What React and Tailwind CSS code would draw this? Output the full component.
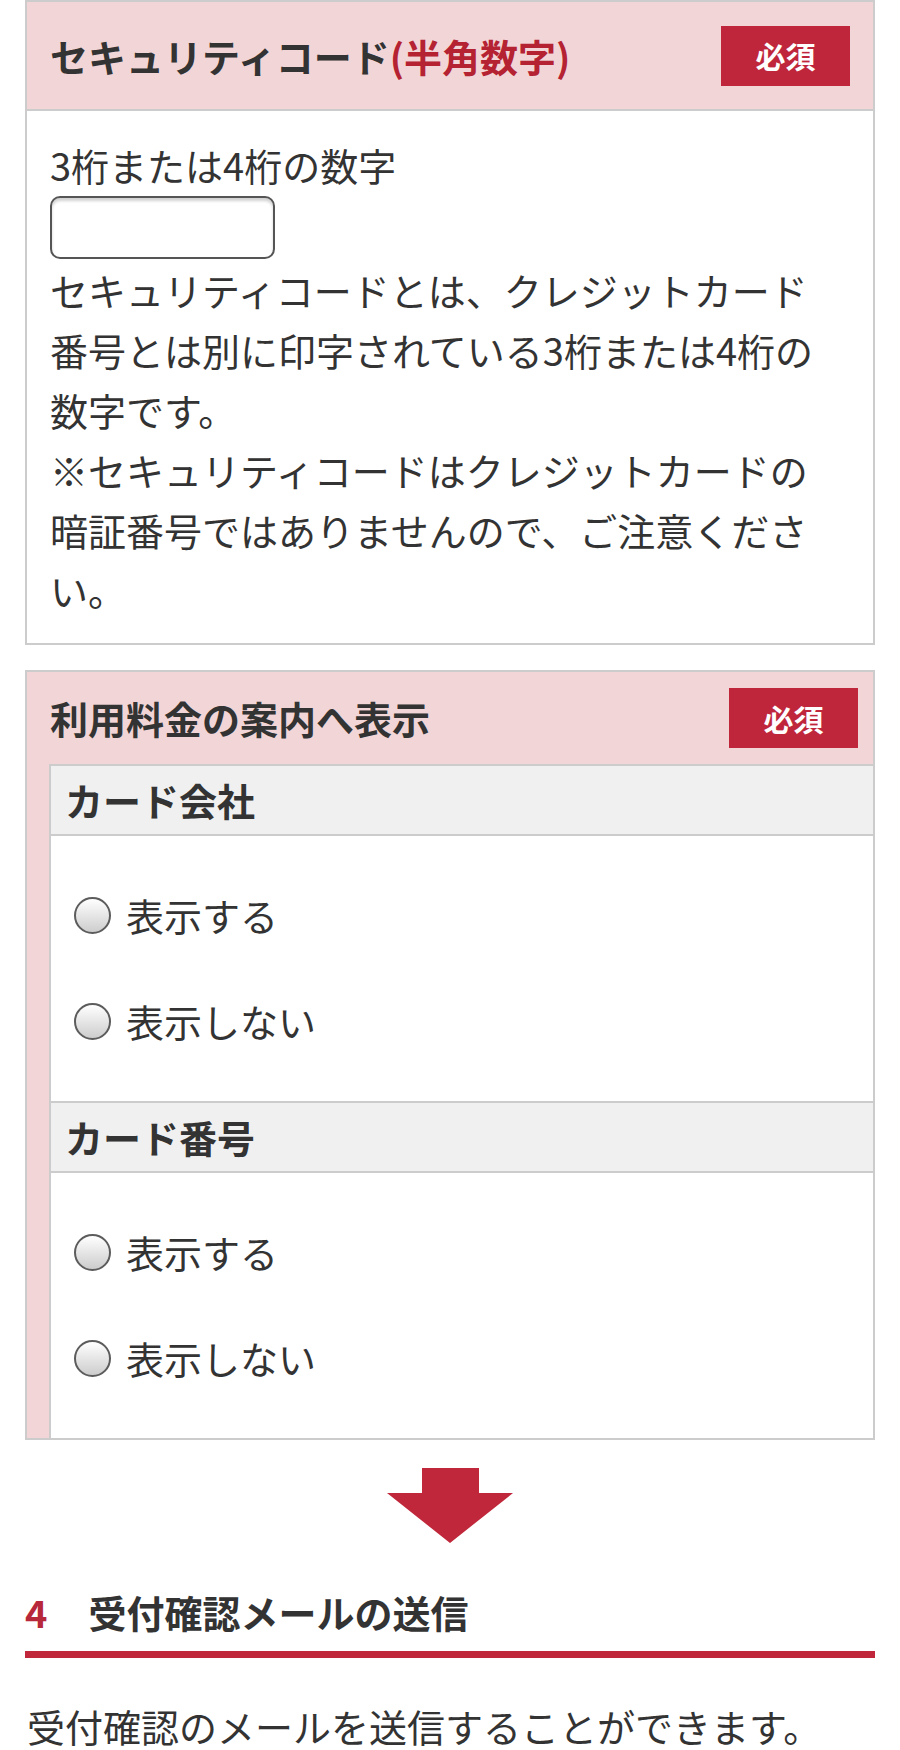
import React from "react"

const Badge = ({ className }) => (
  <span className={"flex h-[60px] w-[129px] items-center justify-center bg-[#c0263b] text-[30px] font-bold text-white " + (className || "")}>
    必須
  </span>
)

const Radio = ({ label }) => (
  <label className="flex h-[106px] items-center">
    <span className="h-[37px] w-[37px] rounded-full border-2 border-[#5c5c5c] bg-linear-to-b from-white to-[#cdcdcd]" />
    <span className="ml-[15px] text-[38px] leading-[60px]">{label}</span>
  </label>
)

const SubSection = ({ title }) => (
  <div>
    <div className="flex h-[72px] items-center border-y-2 border-[#cccccc] bg-[#f0f0f0] pl-[14px]">
      <span className="text-[38px] font-bold leading-none">{title}</span>
    </div>
    <div className="pl-[23px] pt-[26px] pb-[27px]">
      <Radio label="表示する" />
      <Radio label="表示しない" />
    </div>
  </div>
)

const App = () => {
  return (
    <div className="min-h-[1750px] bg-white font-['Noto_Sans_CJK_JP','Noto_Sans',sans-serif] text-[#333333]">
      {/* security code */}
      <section className="mx-[25px] border-2 border-[#cccccc]">
        <div className="flex h-[109px] items-center justify-between border-b-2 border-[#cccccc] bg-[#f2d6d7] pl-[23px] pr-[23px]">
          <h3 className="text-[38px] font-bold leading-none">
            セキュリティコード<span className="text-[#b52232]">(半角数字)</span>
          </h3>
          <Badge />
        </div>
        <div className="px-[23px] pt-6 pb-[23px] text-[38px] leading-[60px]">
          <p>3桁または4桁の数字</p>
          <div className="mt-px h-[63px] w-[225px] rounded-[10px] border-2 border-[#555555] shadow-[inset_0_3px_3px_rgba(0,0,0,0.18)]" />
          <p className="mt-px">
            セキュリティコードとは、クレジットカード<br />
            番号とは別に印字されている3桁または4桁の<br />
            数字です。<br />
            ※セキュリティコードはクレジットカードの<br />
            暗証番号ではありませんので、ご注意くださ<br />
            い。
          </p>
        </div>
      </section>

      {/* display on statement */}
      <section className="mx-[25px] mt-[25px] border-2 border-[#cccccc] bg-[#f2d6d7]">
        <div className="flex items-center justify-between pt-4 pb-4 pl-[23px] pr-[15px]">
          <h3 className="text-[38px] font-bold leading-none">利用料金の案内へ表示</h3>
          <Badge />
        </div>
        <div className="pl-[22px]">
          <div className="border-l-2 border-[#cccccc] bg-white">
            <SubSection title="カード会社" />
            <SubSection title="カード番号" />
          </div>
        </div>
      </section>

      <svg className="mx-auto mt-[28px] block" width="126" height="75" viewBox="0 0 126 75">
        <path d="M35 0 H92 V25 H126 L63 75 L0 25 H35 Z" fill="#c0273b" />
      </svg>

      {/* step 4 */}
      <div className="mx-[25px] mt-[40px]">
        <h2 className="flex items-baseline border-b-[7px] border-[#c0273b] pb-[11px] text-[38px] font-bold leading-[57px]">
          <span className="text-[#b8283b]">4</span>
          <span className="ml-[41px]">受付確認メールの送信</span>
        </h2>
        <p className="mt-[38px] px-[2px] text-[38px] leading-[60px]">受付確認のメールを送信することができます。</p>
      </div>
    </div>
  )
}

export default App
